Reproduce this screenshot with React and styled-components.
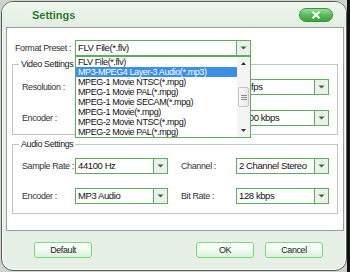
import React from 'react';
import styled, { createGlobalStyle } from 'styled-components';

const GlobalStyle = createGlobalStyle`
  html, body {
    margin: 0;
    padding: 0;
  }
  body {
    width: 350px;
    height: 272px;
    overflow: hidden;
    background: linear-gradient(to right, #cfd3cf 0, #cfd3cf 347px, #101010 347px);
    font-family: "Liberation Sans", Arial, sans-serif;
    font-size: 9px;
    letter-spacing: -0.4px;
    color: #222;
  }
`;

const Window = styled.div`
  margin: 1px 0 0 1px;
  width: 346px;
  height: 270px;
  box-sizing: border-box;
  border: 1px solid #5c5c5c;
  border-radius: 12px;
  background: #e6f0e6;
  box-shadow: inset 0 0 0 1px #f6fbf6;
  display: flex;
  flex-direction: column;
  overflow: hidden;
`;

const TitleBar = styled.div`
  height: 25px;
  flex-shrink: 0;
  display: flex;
  align-items: center;
  justify-content: space-between;
  padding: 0 13px 0 30px;
  background: linear-gradient(#eef6ee, #e3eee3);
`;

const Title = styled.div`
  font-weight: bold;
  font-size: 11px;
  letter-spacing: 0;
  color: #1c7a1c;
  text-shadow: 0 0 2px #fff, 0 0 2px #fff;
`;

const CloseButton = styled.div`
  width: 34px;
  height: 14px;
  box-sizing: border-box;
  border: 1px solid #3d8f3d;
  border-radius: 7px;
  background: linear-gradient(#9ade9a, #55b955 55%, #3ea33e);
  display: flex;
  align-items: center;
  justify-content: center;
`;

const Panel = styled.div`
  margin: 0 2px 0 4px;
  height: 204px;
  flex-shrink: 0;
  box-sizing: border-box;
  background: #fff;
  border: 1px solid #9c9c9c;
  padding: 12px 5px 0 5px;
`;

const FormatRow = styled.div`
  display: flex;
  align-items: center;
  height: 16px;
  padding-left: 3px;
`;

const Label = styled.div`
  width: ${(p) => p.$w}px;
  margin-left: ${(p) => p.$indent || 0}px;
  flex-shrink: 0;
  color: #333;
  white-space: nowrap;
`;

const SelectBox = styled.div`
  position: relative;
  width: ${(p) => p.$w}px;
  height: 16px;
  flex-shrink: 0;
  box-sizing: border-box;
  border: 1px solid #5dad5d;
  background: #fff;
  display: flex;
`;

const SelectValue = styled.div`
  flex: 1;
  padding-left: 2px;
  line-height: 14px;
  font-size: 9.5px;
  color: #111;
  white-space: nowrap;
  overflow: hidden;
`;

const SelectArrow = styled.div`
  width: 13px;
  border-left: 1px solid #5dad5d;
  background: #eeeeee;
  display: flex;
  align-items: center;
  justify-content: center;
`;

const DropList = styled.div`
  position: absolute;
  top: 15px;
  left: -1px;
  width: 176px;
  height: 82px;
  box-sizing: border-box;
  border: 1px solid #5dad5d;
  background: #fff;
  display: flex;
  z-index: 5;
`;

const Items = styled.div`
  flex: 1;
  overflow: hidden;
`;

const Item = styled.div`
  height: 10px;
  line-height: 10px;
  padding-left: 2px;
  white-space: nowrap;
  overflow: hidden;
  color: ${(p) => (p.$active ? '#fff' : '#111')};
  background: ${(p) => (p.$active ? '#3c8ee6' : 'transparent')};
`;

const ScrollBar = styled.div`
  width: 13px;
  background: #f4f4f4;
  display: flex;
  flex-direction: column;
  align-items: center;
`;

const ScrollArrow = styled.div`
  height: 13px;
  width: 100%;
  display: flex;
  align-items: center;
  justify-content: center;
`;

const ScrollTrack = styled.div`
  flex: 1;
  width: 100%;
  padding-top: 17px;
  box-sizing: border-box;
  display: flex;
  justify-content: center;
`;

const Thumb = styled.div`
  width: 11px;
  height: 20px;
  box-sizing: border-box;
  border: 1px solid #c4c4c4;
  border-radius: 2px;
  background: linear-gradient(to right, #fafafa, #e8e8e8);
  display: flex;
  align-items: center;
  justify-content: center;
`;

const Group = styled.fieldset`
  margin: ${(p) => p.$top}px 0 0;
  padding: ${(p) => p.$padTop}px 0 ${(p) => p.$padBottom}px 0;
  border: 1px solid #c4c4c4;
  min-width: 0;
`;

const Legend = styled.legend`
  padding: 0 2px;
  margin-left: 6px;
  line-height: 12px;
  color: #222;
`;

const Rows = styled.div`
  display: flex;
  flex-direction: column;
  gap: ${(p) => p.$gap}px;
  padding: 0 8px 0 9px;
`;

const Row = styled.div`
  display: flex;
  align-items: center;
  height: 16px;
`;

const Footer = styled.div`
  flex: 1;
  display: flex;
  align-items: flex-start;
  padding: 11px 23px 0 32px;
`;

const Button = styled.div`
  width: 58px;
  height: 16px;
  margin-left: ${(p) => p.$ml || 0};
  box-sizing: border-box;
  border: 1px solid #74dc74;
  border-radius: 3px;
  background: linear-gradient(#ffffff, #f1faf1 50%, #dcf1dc);
  display: flex;
  align-items: center;
  justify-content: center;
  color: #222;
`;

const DownTriangle = () => (
  <svg width="7" height="4" viewBox="0 0 7 4">
    <path d="M0.5 0.5 L6.5 0.5 L3.5 3.5 Z" fill="#1e7a1e" />
  </svg>
);

const ScrollTriangle = ({ up }) => (
  <svg width="5" height="3" viewBox="0 0 5 3">
    <path d={up ? 'M0 3 L5 3 L2.5 0 Z' : 'M0 0 L5 0 L2.5 3 Z'} fill="#333" />
  </svg>
);

const Grip = () => (
  <svg width="6" height="5" viewBox="0 0 6 5">
    <path d="M0 0.5 H6 M0 2.5 H6 M0 4.5 H6" stroke="#8a8a8a" strokeWidth="1" />
  </svg>
);

const Select = ({ w, value, children }) => (
  <SelectBox $w={w}>
    <SelectValue>{value}</SelectValue>
    <SelectArrow>
      <DownTriangle />
    </SelectArrow>
    {children}
  </SelectBox>
);

const formats = [
  'FLV File(*.flv)',
  'MP3-MPEG4 Layer-3 Audio(*.mp3)',
  'MPEG-1 Movie NTSC(*.mpg)',
  'MPEG-1 Movie PAL(*.mpg)',
  'MPEG-1 Movie SECAM(*.mpg)',
  'MPEG-1 Movie(*.mpg)',
  'MPEG-2 Movie NTSC(*.mpg)',
  'MPEG-2 Movie PAL(*.mpg)',
];

const App = () => {
  return (
    <>
      <GlobalStyle />
      <Window>
        <TitleBar>
          <Title>Settings</Title>
          <CloseButton>
            <svg width="10" height="8" viewBox="0 0 10 8">
              <path d="M1.5 0.8 L8.5 7.2 M8.5 0.8 L1.5 7.2" stroke="#fff" strokeWidth="2" />
            </svg>
          </CloseButton>
        </TitleBar>

        <Panel>
          <FormatRow>
            <Label $w={60}>Format Preset :</Label>
            <Select w={176} value="FLV File(*.flv)">
              <DropList>
                <Items>
                  {formats.map((f, i) => (
                    <Item key={f} $active={i === 1}>
                      {f}
                    </Item>
                  ))}
                </Items>
                <ScrollBar>
                  <ScrollArrow>
                    <ScrollTriangle up />
                  </ScrollArrow>
                  <ScrollTrack>
                    <Thumb>
                      <Grip />
                    </Thumb>
                  </ScrollTrack>
                  <ScrollArrow>
                    <ScrollTriangle />
                  </ScrollArrow>
                </ScrollBar>
              </DropList>
            </Select>
          </FormatRow>

          {/* the left selects and right labels sit under the open list */}
          <Group $top={2} $padTop={9} $padBottom={8}>
            <Legend>Video Settings</Legend>
            <Rows $gap={15}>
              <Row>
                <Label $w={53}>Resolution :</Label>
                <Select w={93} value="" />
                <Label $w={55} $indent={13} />
                <Select w={93} value="30 fps" />
              </Row>
              <Row>
                <Label $w={53}>Encoder :</Label>
                <Select w={93} value="" />
                <Label $w={55} $indent={13} />
                <Select w={93} value="1000 kbps" />
              </Row>
            </Rows>
          </Group>

          <Group $top={3} $padTop={8} $padBottom={9}>
            <Legend>Audio Settings</Legend>
            <Rows $gap={14}>
              <Row>
                <Label $w={53}>Sample Rate :</Label>
                <Select w={93} value="44100 Hz" />
                <Label $w={55} $indent={13}>Channel :</Label>
                <Select w={93} value="2 Channel Stereo" />
              </Row>
              <Row>
                <Label $w={53}>Encoder :</Label>
                <Select w={93} value="MP3 Audio" />
                <Label $w={55} $indent={13}>Bit Rate :</Label>
                <Select w={93} value="128 kbps" />
              </Row>
            </Rows>
          </Group>
        </Panel>

        <Footer>
          <Button>Default</Button>
          <Button $ml="auto">OK</Button>
          <Button $ml="11px">Cancel</Button>
        </Footer>
      </Window>
    </>
  );
};

export default App;
